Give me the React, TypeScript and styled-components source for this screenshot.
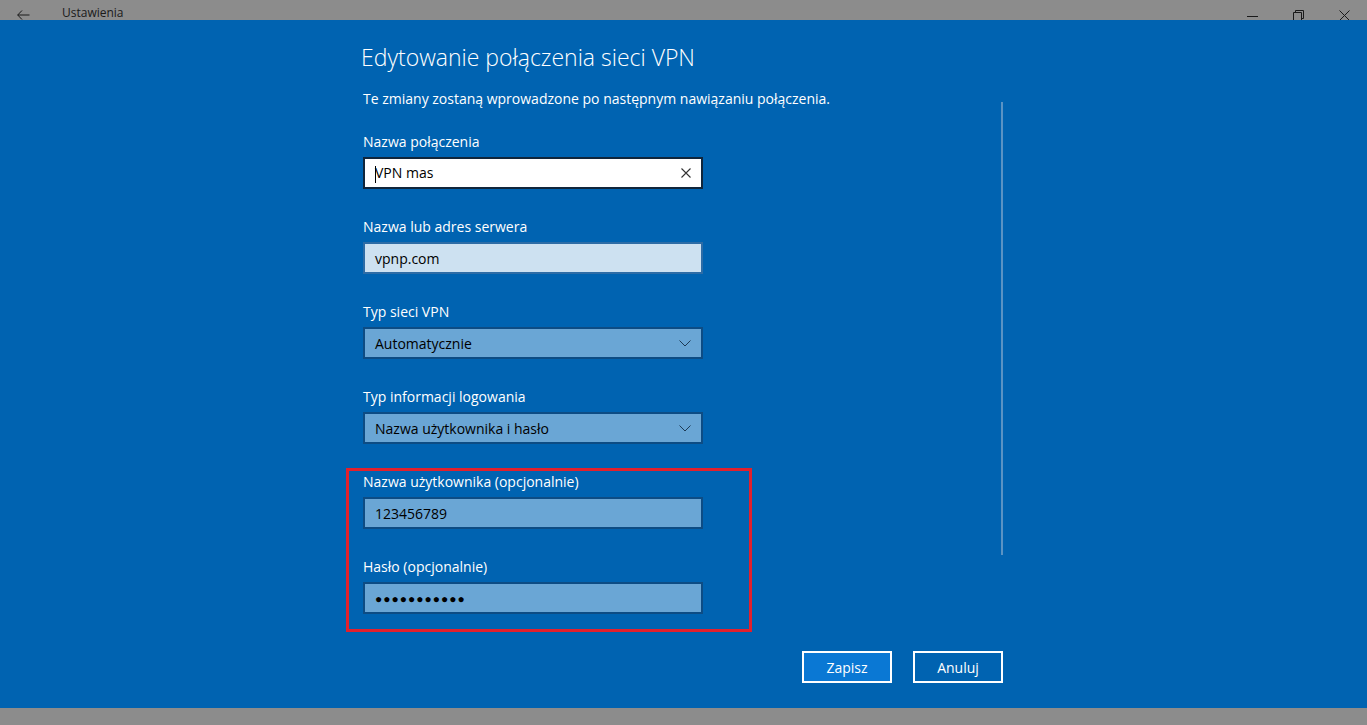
import React from 'react'
import styled, { createGlobalStyle } from 'styled-components';

const GlobalStyle = createGlobalStyle`
    html, body {
        margin: 0;
        padding: 0;
        background: #8c8c8c;
    }
    * {
        box-sizing: border-box;
    }
`

const Page = styled.div`
    width: 1367px;
    height: 725px;
    display: flex;
    flex-direction: column;
    overflow: hidden;
    font-family: "Open Sans", "Noto Sans", sans-serif;
`

const TitleBar = styled.div`
    height: 20px;
    flex: none;
    background: #8c8c8c;
    display: flex;
    align-items: flex-start;
    overflow: hidden;
    color: #1a1a1a;
`

const BackButton = styled.div`
    width: 46px;
    padding: 10px 0 0 17px;
    line-height: 0;
`

const WindowTitle = styled.div`
    padding-top: 6px;
    margin-left: 16px;
    font-size: 12px;
    line-height: 14px;
`

const Controls = styled.div`
    margin-left: auto;
    display: flex;
`

const ControlButton = styled.div`
    width: 46px;
    height: 20px;
    display: flex;
    justify-content: center;
    padding-top: 10px;
    line-height: 0;
`

const Main = styled.div`
    flex: 1;
    background: #0063b1;
    padding: 22px 0 0 361px;
`

const Dialog = styled.div`
    width: 642px;
    display: flex;
    flex-direction: column;
`

const Heading = styled.h1`
    margin: 0;
    font-size: 23px;
    line-height: 30px;
    font-weight: 300;
    color: #ffffff;
`

const Body = styled.div`
    display: flex;
    margin-top: 17px;
`

const Form = styled.div`
    display: flex;
    flex-direction: column;
    padding-left: 2px;
`

const Intro = styled.p`
    margin: 0 0 23px;
    font-size: 14px;
    line-height: 20px;
    color: #ffffff;
`

const FieldList = styled.div`
    display: flex;
    flex-direction: column;
    align-items: flex-start;
    gap: 28px;
`

const Highlight = styled.div`
    position: relative;
    display: flex;
    flex-direction: column;
    gap: 28px;

    &::after {
        content: "";
        position: absolute;
        top: -4px;
        left: -17px;
        right: -49px;
        bottom: -18px;
        border: 3px solid #e3202c;
        pointer-events: none;
    }
`

const Field = styled.div`
    display: flex;
    flex-direction: column;
    gap: 5px;
    width: 340px;
`

const Label = styled.label`
    font-size: 14px;
    line-height: 20px;
    color: #ffffff;
`

type BoxKind = 'active' | 'light' | 'select';

const Box = styled.div<{ $kind: BoxKind }>`
    height: 32px;
    display: flex;
    align-items: center;
    padding: 0 10px 0 10px;
    font-size: 14px;
    color: #000000;
    border: 2px solid ${({ $kind }) =>
        $kind === 'active' ? '#10263c' : $kind === 'light' ? '#2d6ca6' : '#0d4c84'};
    background: ${({ $kind }) =>
        $kind === 'active' ? '#ffffff' : $kind === 'light' ? '#cde1f1' : '#6aa6d5'};
`

const Value = styled.span`
    flex: 1;
    white-space: nowrap;
`

const Caret = styled.span`
    display: inline-block;
    width: 1px;
    height: 17px;
    background: #000000;
    vertical-align: middle;
    margin-right: -1px;
`

const Dots = styled.span`
    flex: 1;
    font-size: 12px;
    letter-spacing: 1px;
    padding-top: 1px;
`

const Track = styled.div`
    margin-left: auto;
    margin-top: 13px;
    width: 2px;
    height: 453px;
    background: #5a93c4;
`

const Actions = styled.div`
    display: flex;
    justify-content: flex-end;
    gap: 21px;
    margin-top: 37px;
`

const Button = styled.button<{ $primary?: boolean }>`
    width: 90px;
    height: 32px;
    border: 2px solid #ffffff;
    background: ${({ $primary }) => ($primary ? '#0a78d4' : 'transparent')};
    color: #ffffff;
    font-family: inherit;
    font-size: 14px;
    padding: 0;
`

const BottomBar = styled.div`
    height: 17px;
    flex: none;
    background: #8c8c8c;
`

const Chevron = () => (
    <svg width="12" height="7" viewBox="0 0 12 7">
        <path d="M0.5 0.5 L6 6 L11.5 0.5" fill="none" stroke="#1d3a55" strokeWidth="1" />
    </svg>
)

const ClearIcon = () => (
    <svg width="10" height="10" viewBox="0 0 10 10">
        <path d="M0.5 0.5 L9.5 9.5 M9.5 0.5 L0.5 9.5" fill="none" stroke="#333333" strokeWidth="1.1" />
    </svg>
)

export default function App() {
    return (
        <>
            <GlobalStyle />
            <Page>
                <TitleBar>
                    <BackButton>
                        <svg width="13" height="10" viewBox="0 0 13 10">
                            <path d="M5 0.5 L0.7 5 L5 9.5 M0.7 5 H12.5" fill="none" stroke="#1a1a1a" strokeWidth="1" />
                        </svg>
                    </BackButton>
                    <WindowTitle>Ustawienia</WindowTitle>
                    <Controls>
                        <ControlButton>
                            <svg width="11" height="11" viewBox="0 0 11 11">
                                <path d="M0 6.5 H11" stroke="#1a1a1a" strokeWidth="1" />
                            </svg>
                        </ControlButton>
                        <ControlButton>
                            <svg width="11" height="11" viewBox="0 0 11 11">
                                <path d="M0.5 2.5 H8.5 V10.5 H0.5 Z M2.5 2.5 V0.5 H10.5 V8.5 H8.5" fill="none" stroke="#1a1a1a" strokeWidth="1" />
                            </svg>
                        </ControlButton>
                        <ControlButton>
                            <svg width="11" height="11" viewBox="0 0 11 11">
                                <path d="M0.5 0.5 L10.5 10.5 M10.5 0.5 L0.5 10.5" fill="none" stroke="#1a1a1a" strokeWidth="1" />
                            </svg>
                        </ControlButton>
                    </Controls>
                </TitleBar>
                <Main>
                    <Dialog>
                        <Heading>Edytowanie połączenia sieci VPN</Heading>
                        <Body>
                            <Form>
                                <Intro>Te zmiany zostaną wprowadzone po następnym nawiązaniu połączenia.</Intro>
                                <FieldList>
                                    <Field>
                                        <Label>Nazwa połączenia</Label>
                                        <Box $kind="active">
                                            <Value><Caret />VPN mas</Value>
                                            <ClearIcon />
                                        </Box>
                                    </Field>
                                    <Field>
                                        <Label>Nazwa lub adres serwera</Label>
                                        <Box $kind="light">
                                            <Value>vpnp.com</Value>
                                        </Box>
                                    </Field>
                                    <Field>
                                        <Label>Typ sieci VPN</Label>
                                        <Box $kind="select">
                                            <Value>Automatycznie</Value>
                                            <Chevron />
                                        </Box>
                                    </Field>
                                    <Field>
                                        <Label>Typ informacji logowania</Label>
                                        <Box $kind="select">
                                            <Value>Nazwa użytkownika i hasło</Value>
                                            <Chevron />
                                        </Box>
                                    </Field>
                                    <Highlight>
                                        <Field>
                                            <Label>Nazwa użytkownika (opcjonalnie)</Label>
                                            <Box $kind="select">
                                                <Value>123456789</Value>
                                            </Box>
                                        </Field>
                                        <Field>
                                            <Label>Hasło (opcjonalnie)</Label>
                                            <Box $kind="select">
                                                <Dots>●●●●●●●●●●●</Dots>
                                            </Box>
                                        </Field>
                                    </Highlight>
                                </FieldList>
                            </Form>
                            <Track />
                        </Body>
                        <Actions>
                            <Button $primary>Zapisz</Button>
                            <Button>Anuluj</Button>
                        </Actions>
                    </Dialog>
                </Main>
                <BottomBar />
            </Page>
        </>
    );
}
